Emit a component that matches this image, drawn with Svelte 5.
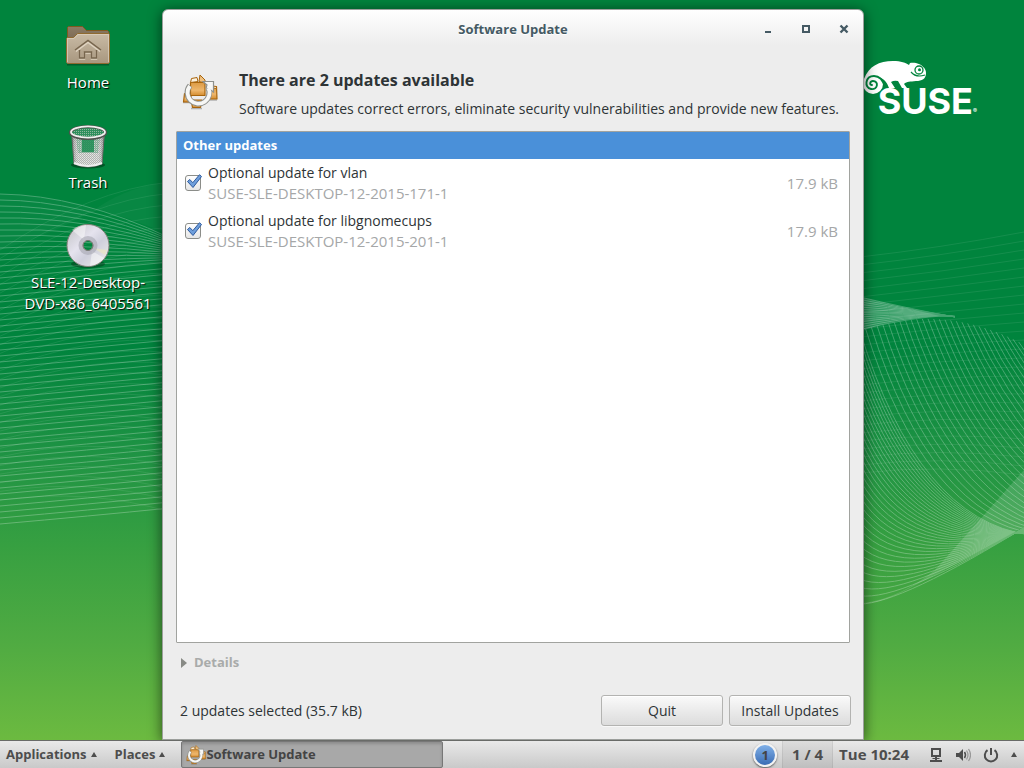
<script>
  const updates = [
    { id: 'vlan', title: 'Optional update for vlan', pkg: 'SUSE-SLE-DESKTOP-12-2015-171-1', size: '17.9 kB' },
    { id: 'libgnomecups', title: 'Optional update for libgnomecups', pkg: 'SUSE-SLE-DESKTOP-12-2015-201-1', size: '17.9 kB' },
  ];
  let checked = $state({ vlan: true, libgnomecups: true });

  const mix = (a, b, t) => a + (b - a) * t;
  const mixPoint = (p, q, t) => [mix(p[0], q[0], t), mix(p[1], q[1], t)];
  const bez = (p, t) => mixPoint(mixPoint(p[0], p[1], t), mixPoint(p[1], p[2], t), t);

  // Left hand mesh: gently rising lines, bent down at the top
  const leftLines = Array.from({ length: 56 }, (_, i) => {
    const t = i / 55;
    const bend = Math.max(0, 1 - t * 4);
    const y = mix(194, 524, t);
    return `M0 ${y} Q${mix(80, 90, t)} ${y - 8 + bend * 9} 170 ${y - 16 + bend * 60}`;
  });
  const crossLines = Array.from({ length: 30 }, (_, i) => {
    const t = i / 29;
    return `M0 ${mix(250, 500, t)} Q90 ${mix(190, 488, t)} 170 ${mix(182, 512, t)}`;
  });
  const faintRight = Array.from({ length: 28 }, (_, i) => `M860 ${257 + i * 8} Q940 ${248 + i * 8} 1024 ${232 + i * 9}`);

  // Right hand wave: lines leave the left edge first, then the ridge on top
  const ridge = [[860, 331], [945, 300], [1030, 348]];
  const edgeLines = Array.from({ length: 34 }, (_, i) => {
    const t = i / 33;
    const c = mixPoint([900, 604], [918, 520], t);
    const e = mixPoint([1030, 524], [1030, 535], t);
    return `M860 ${mix(604, 331, t)} Q${c.join(' ')} ${e.join(' ')}`;
  });
  const ridgeLines = Array.from({ length: 30 }, (_, i) => {
    const t = (i + 1) / 30;
    const c = mixPoint([918, 520], [1100, 440], t);
    const e = mixPoint([1030, 535], [1200, 500], t);
    return `M${bez(ridge, t).join(' ')} Q${c.join(' ')} ${e.join(' ')}`;
  });
  const fanLines = Array.from({ length: 14 }, (_, i) => `M860 ${297 + i * 2.5} Q${915 + i} ${310 + i * 0.3} 955 ${317 - i * 0.05}`);
</script>

{#snippet updateIcon(size)}
  <svg width={size} height={size} viewBox="0 0 36 36" aria-hidden="true">
    <defs>
      <linearGradient id="box{size}" x1="0" y1="0" x2="0" y2="1">
        <stop offset="0" stop-color="#dc9a44" /><stop offset=".6" stop-color="#eeb76d" /><stop offset="1" stop-color="#d48d30" />
      </linearGradient>
    </defs>
    <path d="M1 28.500h9M9 34.500h11M27 26h8" stroke="#777" stroke-width="1.500" opacity=".5" />
    <g fill="url(#box{size})" stroke="#a8650d" stroke-width="1.200" stroke-linejoin="round">
      <path d="M2.500 19.500H9V28H1.500z" />
      <path d="M9 26h11l-1.500 7.500h-8z" />
      <path d="M28 13.500l6.500-1 .5 12.500h-8z" />
      <path d="M8.500 8.500H23v13H8.500z" />
    </g>
    <g stroke="#a8650d" stroke-linejoin="round">
      <path d="M8.500 8.500l1-4 5.500-1 1 4z" fill="#fdf2df" />
      <path d="M18 1l5 5v3l-6-1.500z" fill="#efc181" />
      <path d="M28 13.500l2.500-1.500 4 .5v2z" fill="#fdf2df" />
    </g>
    <path d="M8 11.500a11 11 0 1 0 18.500 3" fill="none" stroke="#8f918d" stroke-width="5.600" />
    <path d="M21 7.500h10.500V18L28 15.500l-4-1.500 1-3z" fill="#f7f7f5" stroke="#8f918d" stroke-width="1.200" />
    <path d="M7.800 12a11 11 0 1 0 18.700 2" fill="none" stroke="#f7f7f5" stroke-width="3.800" />
  </svg>
{/snippet}

<div class="screen">
  <main class="desktop">
    <svg class="wallpaper" viewBox="0 0 1024 740" preserveAspectRatio="none" aria-hidden="true">
      <g class="lines left">{#each leftLines as d}<path {d} />{/each}</g>
      <g class="lines faint">
        {#each crossLines as d}<path {d} />{/each}
        {#each faintRight as d}<path {d} />{/each}
      </g>
      <path d="M0 250Q60 232 100 206 130 186 170 182V235Q80 196 0 194z" fill="#fff" opacity=".03" />
      <g class="lines wave">
        {#each edgeLines as d}<path {d} />{/each}
        {#each ridgeLines as d}<path {d} />{/each}
        {#each fanLines as d}<path {d} />{/each}
      </g>
      <path d="M864 603Q900 598 935 570L1024 470V527Q960 562 910 588 880 604 864 603z" fill="#fff" opacity=".14" />
      <path d="M864 298L940 316Q900 318 864 330z" fill="#fff" opacity=".15" />
    </svg>

    <div class="brand">
      <svg width="72" height="44" viewBox="0 0 72 44" aria-hidden="true">
        <path fill="#fff" d="M3 22C8 9 18 4 32 4c8 0 13 2 16 4l1-2c5-1 11 1 13 4 2 1 3 4 3 6 0 6-4 8-10 8-6 1-9 0-12 3l3 4h-5l-4-7q-4-1-7 1l4 6h-6c-2-6-5-9-10-11-6-2-12 0-15 4z" />
        <circle cx="12" cy="27" r="10" fill="#fff" />
        <path d="M24 30c-2-7-5-11-11-11-9 0-10 12-3 13 7 1 8-8 2-8-3 0-4 4-1 4" fill="none" stroke="#00843d" stroke-width="1.900" stroke-linecap="round" />
        <circle cx="58" cy="13" r="4" fill="#fff" stroke="#00843d" stroke-width="1.300" />
        <circle cx="58.500" cy="12.800" r="1.500" fill="#00843d" />
        <path d="M50 15q5 6 14 3" fill="none" stroke="#00843d" stroke-width="1.200" />
      </svg>
      <span class="word">SUSE<small>®</small></span>
    </div>

    <nav class="icons" aria-label="Desktop">
      <a href="#home">
        <svg width="48" height="48" viewBox="0 0 48 48" aria-hidden="true">
          <defs>
            <linearGradient id="fb" x1="0" y1="0" x2="0" y2="1"><stop offset="0" stop-color="#8d7b64" /><stop offset="1" stop-color="#73624c" /></linearGradient>
            <linearGradient id="ff" x1="0" y1="0" x2="0" y2="1"><stop offset="0" stop-color="#c9bba5" /><stop offset="1" stop-color="#a8977f" /></linearGradient>
          </defs>
          <path d="M3 43.500h42" stroke="#003c1c" stroke-width="2" opacity=".5" />
          <path d="M3.500 20V6.500l1-1h14l4 4h21l1.500 1.500V25z" fill="url(#fb)" stroke="#80591f" />
          <path d="M2.500 17.500l1-1h6l4-4h31l1 1v28l-1 1h-41l-1-1z" fill="url(#ff)" stroke="#8f6a30" />
          <path d="M3.500 41V17.500h6.500l4-4h30.500V41" fill="none" stroke="#ddd2c0" opacity=".7" />
          <path d="M12 30.500l12-9 12 9M15.500 30v8h5v-6h7v6h5v-8" fill="none" stroke="#dfd3c0" stroke-width="1.500" />
          <path d="M11 29l13-9.500L37 29M15.500 29v8h5v-6h7v6h5v-8" fill="none" stroke="#77654d" stroke-width="1.500" />
        </svg>
        <span>Home</span>
      </a>
      <a href="#trash">
        <svg width="48" height="48" viewBox="0 0 48 48" aria-hidden="true">
          <defs>
            <pattern id="mesh" width="2" height="2" patternUnits="userSpaceOnUse"><rect width="2" height="2" fill="#a0a39f" /><rect width="1" height="1" fill="#e0e1df" /><rect x="1" y="1" width="1" height="1" fill="#d0d2cf" /></pattern>
            <pattern id="back" width="2" height="2" patternUnits="userSpaceOnUse"><rect width="2" height="2" fill="#2e8f5c" /><rect width="1" height="1" fill="#8cb79c" /></pattern>
            <linearGradient id="shade"><stop offset="0" stop-color="#444" stop-opacity=".5" /><stop offset=".2" stop-color="#fff" stop-opacity=".2" /><stop offset=".8" stop-color="#fff" stop-opacity=".2" /><stop offset="1" stop-color="#444" stop-opacity=".5" /></linearGradient>
          </defs>
          <ellipse cx="24" cy="44" rx="17" ry="3.500" fill="#00250f" opacity=".5" />
          <path d="M7.500 11l2.500 32q14 6 28 0l2.500-32z" fill="url(#mesh)" stroke="#666964" />
          <path d="M7.500 11l2.500 32q14 6 28 0l2.500-32z" fill="url(#shade)" />
          <path d="M12 17h24l-2 15H14z" fill="url(#back)" opacity=".35" />
          <path d="M18 17h12v14H18z" fill="#168a4d" opacity=".8" />
          <path d="M10 42q14 6 28 0" fill="none" stroke="#eee" stroke-width="2" />
          <ellipse cx="24" cy="11.500" rx="17.500" ry="6" fill="url(#back)" stroke="#4f524e" stroke-width="3.200" />
          <ellipse cx="24" cy="11" rx="17" ry="5.600" fill="none" stroke="#eff0ee" stroke-width="1.800" />
        </svg>
        <span>Trash</span>
      </a>
      <a href="#dvd">
        <svg width="48" height="48" viewBox="0 0 48 48" aria-hidden="true">
          <defs>
            <linearGradient id="disc" x1="0" y1="0" x2="1" y2="1"><stop offset="0" stop-color="#bfc0c2" /><stop offset=".4" stop-color="#e5e3ee" /><stop offset=".6" stop-color="#cfcfdc" /><stop offset="1" stop-color="#f0f0ec" /></linearGradient>
          </defs>
          <ellipse cx="24" cy="43" rx="17" ry="4" fill="#00250f" opacity=".4" />
          <path fill-rule="evenodd" d="M24 3.500a21 21 0 1 0 .01 0zM24 19.500a5 5 0 1 1-.01 0z" fill="url(#disc)" stroke="#85827b" />
          <path d="M20 19L8 9Q14 4 22 4zM28 30l12 7q-6 7-14 8z" fill="#fff" opacity=".45" />
          <path d="M29 27l12 7 2-5z" fill="#ede8bd" opacity=".6" />
          <circle cx="24" cy="24.500" r="7.500" fill="none" stroke="#aaaab6" stroke-width="4" opacity=".65" />
          <circle cx="24" cy="24.500" r="5" fill="none" stroke="#777a74" />
        </svg>
        <span>SLE-12-Desktop-<br />DVD-x86_6405561</span>
      </a>
    </nav>

    <section class="window" aria-labelledby="win-title">
      <header class="titlebar">
        <h1 id="win-title">Software Update</h1>
        <div class="controls">
          <button type="button" aria-label="Minimize"><svg width="12" height="12" viewBox="0 0 12 12"><path d="M3 8h6v2H3z" /></svg></button>
          <button type="button" aria-label="Maximize"><svg width="12" height="12" viewBox="0 0 12 12"><path fill-rule="evenodd" d="M2 2h8v8H2zM4 4v4h4V4z" /></svg></button>
          <button type="button" aria-label="Close"><svg width="12" height="12" viewBox="0 0 12 12"><path d="M2.500 2.500l7 7M9.500 2.500l-7 7" fill="none" stroke="#455a64" stroke-width="2.400" /></svg></button>
        </div>
      </header>

      <div class="body">
        <div class="intro">
          {@render updateIcon(36)}
          <div>
            <h2>There are 2 updates available</h2>
            <p>Software updates correct errors, eliminate security vulnerabilities and provide new features.</p>
          </div>
        </div>

        <div class="list">
          <h3>Other updates</h3>
          <ul>
            {#each updates as u (u.id)}
              <li>
                <span class="tick">
                  <input type="checkbox" id={u.id} bind:checked={checked[u.id]} />
                  {#if checked[u.id]}
                    <svg width="18" height="18" viewBox="0 0 18 18" aria-hidden="true">
                      <path d="M2.500 8.500l2.300-2 3 3.200 6.700-8 2 1.800L8 14.500z" fill="#6f9fdc" stroke="#2d5a9e" stroke-linejoin="round" />
                    </svg>
                  {/if}
                </span>
                <label for={u.id}>{u.title}<span>{u.pkg}</span></label>
                <span class="size">{u.size}</span>
              </li>
            {/each}
          </ul>
        </div>

        <button type="button" class="details">
          <svg width="6" height="10" viewBox="0 0 6 10" aria-hidden="true"><path d="M0 0l6 5-6 5z" fill="#888a85" /></svg>
          Details
        </button>

        <footer>
          <p>2 updates selected (35.7 kB)</p>
          <button type="button">Quit</button>
          <button type="button">Install Updates</button>
        </footer>
      </div>
    </section>
  </main>

  <div class="panel">
    <button type="button" class="menu">Applications<i></i></button>
    <button type="button" class="menu">Places<i></i></button>
    <button type="button" class="task">{@render updateIcon(20)}Software Update</button>
    <div class="tray">
      <button type="button" class="badge">1</button>
      <button type="button" class="workspace">1 / 4</button>
      <button type="button" class="clock">Tue 10:24</button>
      <button type="button" class="status" aria-label="System">
        <svg width="14" height="16" viewBox="0 0 14 16"><path fill-rule="evenodd" d="M2 1h10v9H2zM4 3v5h6V3z" /><path d="M6 10h2v3H6zM3.500 11h7v1h-7zM1 13h12v2H1z" /></svg>
        <svg width="16" height="16" viewBox="0 0 16 16"><path d="M1 6h3l4-4v12l-4-4H1z" /><path d="M9.500 5q2 3 0 6" fill="none" stroke="#4d4d4d" stroke-width="1.500" /><path d="M11.500 3.500q3 4.500 0 9M13.500 2q4 6 0 12" fill="none" stroke="#999" stroke-width="1.300" /></svg>
        <svg width="16" height="16" viewBox="0 0 16 16"><path d="M4.500 3.200a6.200 6.200 0 1 0 7 0M8 1v7" fill="none" stroke="#4d4d4d" stroke-width="2" /></svg>
        <i></i>
      </button>
    </div>
  </div>
</div>

<style>
  :global(body) { margin: 0; }
  * { box-sizing: border-box; }
  h1, h2, h3, p, ul { margin: 0; padding: 0; list-style: none; }
  button { font: inherit; color: inherit; border: 0; background: none; padding: 0; margin: 0; }
  svg { display: block; flex: none; }

  .screen {
    display: flex;
    flex-direction: column;
    min-height: 100vh;
    font: 14px/21px "Open Sans", "Noto Sans", sans-serif;
    color: #2e3436;
  }
  .desktop {
    position: relative;
    flex: 1;
    overflow: hidden;
    background: linear-gradient(#00843d 0%, #00843d 47%, #209444 62%, #37a041 74%, #50ab42 87%, #6cba40 100%);
  }
  .wallpaper { position: absolute; inset: 0; width: 100%; height: 100%; }
  .lines { fill: none; stroke: #fff; }
  .left { opacity: 0.26; }
  .faint { opacity: 0.08; }
  .wave { opacity: 0.26; }

  .brand { position: absolute; top: 57px; right: 47px; width: 116px; }
  .word {
    position: absolute;
    top: 27px;
    right: 0;
    display: flex;
    align-items: flex-end;
    font: 700 36px/34px Inter, sans-serif;
    color: #fff;
  }
  .word small { font-size: 6px; line-height: 14px; }

  .icons {
    position: absolute;
    top: 21px;
    left: 16px;
    width: 144px;
    display: grid;
    gap: 28px;
    font-size: 15px;
  }
  .icons a {
    display: flex;
    flex-direction: column;
    align-items: center;
    gap: 3px;
    text-align: center;
    text-decoration: none;
    white-space: nowrap;
    color: #fff;
    text-shadow: 1px 1px 1px #000;
  }

  .window {
    position: absolute;
    inset: 9px 160px 0 162px;
    display: flex;
    flex-direction: column;
    border: 1px solid #9c9f9c;
    border-radius: 6px 6px 0 0;
    background: linear-gradient(#fff, #ededed 36px);
    box-shadow: 0 2px 14px rgba(0, 0, 0, 0.6);
  }
  .titlebar {
    display: grid;
    grid-template-columns: 1fr auto 1fr;
    align-items: center;
    height: 38px;
  }
  h1 { grid-column: 2; font-size: 13px; line-height: 21px; color: #455a64; text-shadow: 0 1px #fff; }
  .controls { display: flex; justify-content: flex-end; }
  .controls button { width: 38px; height: 38px; display: grid; place-items: center; }
  .controls svg { fill: #455a64; }

  .body { flex: 1; display: flex; flex-direction: column; padding: 20px 12px 13px 13px; }
  .intro { display: flex; gap: 21px; padding: 0 6px 12px; align-items: flex-start; }
  .intro svg { margin-top: 6px; }
  h2 { font-size: 16px; line-height: 24px; margin-bottom: 6px; }
  .intro p { white-space: nowrap; }

  .list { flex: 1; border: 1px solid #a1a39f; border-radius: 1px; background: #fff; margin-right: 1px; }
  h3 { font-size: 13px; line-height: 27px; padding: 0 6px; background: #4a90d9; color: #fff; }
  li { display: flex; align-items: center; height: 48px; padding: 0 11px 0 8px; }
  .tick { position: relative; width: 23px; height: 16px; }
  .tick svg { position: absolute; top: -2px; left: 0; pointer-events: none; }
  input {
    appearance: none;
    display: block;
    width: 16px;
    height: 16px;
    margin: 0;
    border: 1px solid #8b8d89;
    border-radius: 3px;
    background: linear-gradient(#fff, #e6e6e6);
  }
  label { flex: 1; }
  label span { display: block; font-size: 15px; color: #a5a7a8; }
  .size { font-size: 15px; color: #a5a7a8; }

  .details {
    display: flex;
    align-items: center;
    align-self: flex-start;
    gap: 7px;
    margin-top: 9px;
    padding-left: 5px;
    font-size: 13px;
    font-weight: 700;
    color: #a9abaa;
  }
  footer { display: flex; align-items: center; gap: 6px; margin-top: 22px; }
  footer p { flex: 1; padding-left: 4px; }
  footer button {
    width: 122px;
    height: 31px;
    border: 1px solid #b3b3b1;
    border-radius: 3px;
    background: linear-gradient(#fafafa, #dcdcdc);
    box-shadow: inset 0 1px #fff, 0 1px #f8f8f8;
  }

  .panel {
    display: flex;
    align-items: stretch;
    height: 28px;
    padding-left: 6px;
    border-top: 1px solid #696b68;
    background: linear-gradient(#e9e9e9, #c9c9c9);
    font-size: 13px;
    font-weight: 700;
    color: #4d4d4d;
  }
  i { border: solid transparent; border-width: 0 3px 5px; border-bottom-color: #4d4d4d; }
  .menu { display: flex; align-items: center; gap: 4px; margin-right: 18px; }
  .menu + .task { margin-left: -2px; }
  .task {
    display: flex;
    align-items: center;
    flex: 0 1 262px;
    padding-left: 4px;
    border: 1px solid #777;
    border-radius: 2px;
    background: #a8a8a8;
    box-shadow: inset 0 2px 3px #8d8d8d;
    color: #444;
    white-space: nowrap;
  }
  .tray { display: flex; align-items: stretch; margin-left: auto; font-size: 15px; }
  .badge {
    width: 24px;
    height: 24px;
    margin: 2px 5px 0 0;
    border: 2px solid #f2f2f2;
    border-radius: 50%;
    background: linear-gradient(#80b0e8, #3a6cb4);
    box-shadow: 0 1px 2px #555;
    font-size: 13px;
    line-height: 20px;
    color: #444;
  }
  .workspace { width: 51px; background: rgba(0, 0, 0, 0.05); border: solid rgba(0, 0, 0, 0.06); border-width: 0 1px; }
  .clock { padding: 0 6px; }
  .status { display: flex; align-items: center; gap: 12px; padding: 0 7px 0 14px; }
  .status svg { fill: #4d4d4d; }
</style>
